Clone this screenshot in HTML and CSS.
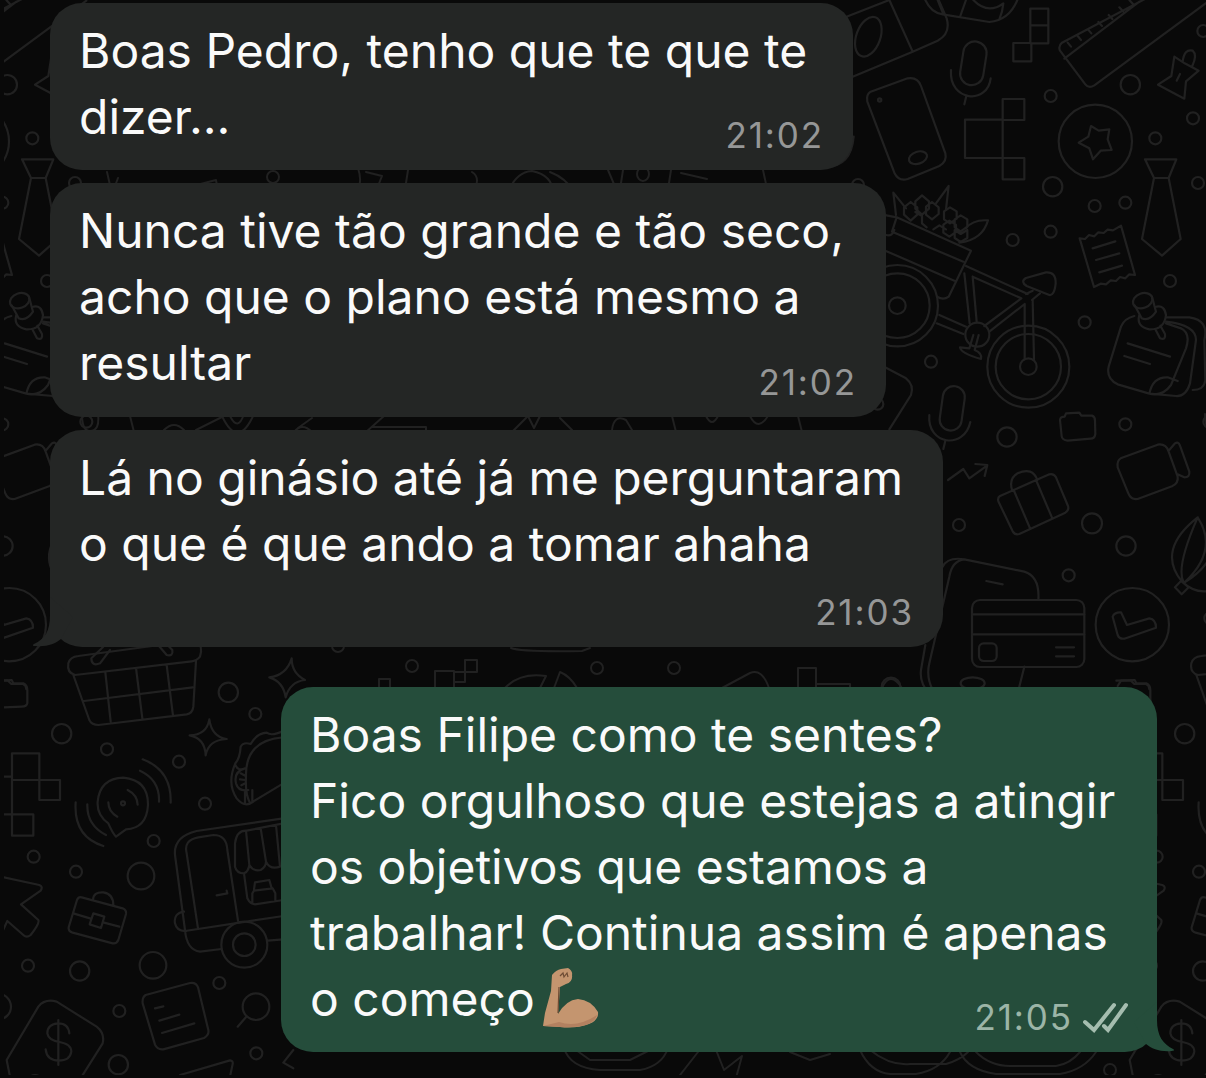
FILE: index.html
```html
<!DOCTYPE html>
<html lang="pt">
<head>
<meta charset="UTF-8" />
<title>Conversa</title>
<meta name="viewport" content="width=device-width, initial-scale=1" />
<link rel="stylesheet" href="styles.css">
</head>
<body>

<svg class="wallpaper" viewBox="0 0 1206 1078" aria-hidden="true">
  <defs>
    <clipPath id="edge"><rect x="4" y="0" width="1202" height="1075"/></clipPath>
    <g id="doodles">
      <!-- phone, ruler, star and tie -->
      <g class="large" transform="translate(846 0) scale(.33333)">
        <path d="M-10 55L130 0L200 155L20 230M130 0L200 155L275 122Q315 100 302 55L278 0"/>
        <ellipse cx="67" cy="110" rx="36" ry="62" transform="rotate(20 67 110)"/>
        <path d="M238 0Q255 38 290 43L430 66Q490 60 514 0M275 0L292 42M360 0L343 48M382 0Q425 45 472 10Q470 35 460 58"/>
        <rect x="347" y="124" width="70" height="132" rx="35" transform="rotate(9 382 190)"/>
        <path d="M315 210C308 305 425 315 434 235M361 288L355 313"/>
        <path d="M553 26h54v104h-54zM553 76h54M502 129h54v55h-54z"/>
        <path d="M895 -2L648 128Q636 138 642 152L718 253Q728 266 745 256L1090 2M655 176L880 5M665 128l10 12M695 108l10 12M726 88l10 12M757 66l11 12M788 45l11 12M820 22l11 12M850 0l11 12"/>
        <path d="M985 170L1016 190L1058 212L1020 244L1015 296L936 254L976 228ZM1010 185Q1015 145 1040 152Q1055 165 1038 200M992 242l10 -20"/>
        <path d="M74 275L185 235Q215 230 225 258L298 460Q304 485 280 498L185 537Q158 545 145 518L64 305Q60 283 74 275Z"/>
        <ellipse cx="216" cy="473" rx="28" ry="18" transform="rotate(-18 216 473)"/>
        <circle cx="101" cy="300" r="5"/>
        <path d="M470 297h65v63h-65zM357 359h113v115h-113zM470 474h65v64h-65z"/>
        <circle cx="748" cy="424" r="110"/>
        <path d="M735 378L758 392L790 388L785 418L797 450L764 452L741 478L730 445L698 428L727 410Z"/>
        <circle cx="614" cy="288" r="18"/><circle cx="853" cy="254" r="29"/><circle cx="1072" cy="93" r="18"/>
        <circle cx="1041" cy="355" r="18"/><circle cx="928" cy="415" r="18"/><circle cx="620" cy="560" r="29"/>
        <circle cx="746" cy="618" r="18"/><circle cx="838" cy="608" r="18"/><circle cx="1056" cy="549" r="18"/>
        <path d="M897 478h94L968 534H924ZM924 534L888 717L948 767L1004 717L968 534"/>
        <path d="M-60 500Q15 500 23 410"/><circle cx="36" cy="555" r="18"/>
      </g>
      <!-- bicycle, receipt and notes -->
      <g class="large" transform="translate(876 180) scale(.33333)">
        <path d="M60 105L52 38L90 85M180 70L218 18L210 88M250 188Q320 180 336 121Q290 118 270 145"/>
        <path d="M118 64l20-18 21 18v22l-21 18-20-18zM84 82l20-16 20 16v22l-20 18-20-18zM150 80l18-14 20 16v20l-20 16-18-14zM118 96l20 12v22l14 12M204 94l18-12 20 12v22l-20 14-18-12zM236 118l18-12 20 12v22l-20 14-18-12zM202 134l18-12 20 12v22l-20 14-18-12zM172 148l18-12 20 12M236 150l18 12 20-12v24l-20 12-18-12z"/>
        <path d="M0 100L62 112L285 212L218 350Q202 362 183 350M62 112L48 155L262 245M0 200L235 302M30 165Q50 170 55 150"/>
        <circle cx="64" cy="377" r="122"/><circle cx="64" cy="377" r="97"/><circle cx="64" cy="377" r="25"/>
        <path d="M270 258L455 342M290 290L302 425M265 280L281 430M190 405L270 440M182 430L262 462M340 455L446 372M325 438L436 355L290 290M446 372L446 538M470 360L474 538M450 342L470 332M468 360L492 340"/>
        <path d="M450 294L510 277Q540 275 539 310Q535 348 520 345L452 318Q432 305 450 294Z"/>
        <circle cx="457" cy="560" r="123"/><circle cx="457" cy="560" r="98"/><circle cx="457" cy="560" r="25"/>
        <circle cx="304" cy="464" r="36"/>
        <path d="M292 465L280 505L252 502Q255 520 315 537Q320 520 296 510L308 465"/>
        <path d="M611 175l16 2 12-12 16 4 12-12 16 2 12-10 16 2 24-14L777 285l-17-2-12 12-16-4-12 12-16-2-14 12-16-2-20 10ZM650 205l68-21M660 240l70-20M670 277l68-20"/>
        <path d="M775 408Q745 415 735 440L698 560Q690 595 725 613L820 641Q860 650 885 615L930 505Q945 460 915 445L870 430M870 412L940 412Q1000 420 985 480L988 600Q985 630 950 630M870 425Q960 435 960 480L942 610Q930 650 900 648L820 641Q830 590 875 592L905 603M755 490L882 530M745 528L822 552"/>
        <ellipse cx="800" cy="362" rx="30" ry="22" transform="rotate(-20 800 362)"/>
        <path d="M776 376L797 415Q820 425 840 395L828 350M790 405Q780 440 820 448Q865 450 870 405Q865 375 842 380M838 448L852 475Q870 482 867 462L853 437"/>
        <circle cx="410" cy="180" r="18"/><circle cx="524" cy="155" r="18"/><circle cx="882" cy="303" r="18"/><circle cx="626" cy="427" r="18"/><circle cx="165" cy="545" r="18"/>
        <path d="M20 558L90 595Q115 615 105 645L40 748"/>
        <rect x="195" y="618" width="66" height="134" rx="33" transform="rotate(8 228 690)"/>
        <circle cx="5" cy="672" r="17"/>
      </g>
      <!-- suitcase, camera, card, balloon -->
      <g class="large" transform="translate(876 400) scale(.33333)">
        <path d="M160 45C152 135 265 150 283 66M208 122L202 147"/>
        <path d="M552 60Q553 50 566 50L570 40L610 38L616 47L648 47Q657 50 657 62L658 102Q656 116 644 116L575 122Q558 120 557 108Z"/>
        <path d="M734 175L845 134Q870 130 878 155L905 230Q908 250 888 259L785 297Q765 300 757 280L725 202Q722 182 734 175ZM878 152L897 130Q907 123 912 137L940 215Q942 232 925 232L903 222"/>
        <path d="M216 240L262 207L280 235L333 197M298 192L334 195L326 228"/>
        <path d="M372 288L520 223Q534 220 540 232L576 318Q580 330 568 338L430 402Q417 406 410 394L367 304Q364 293 372 288ZM408 270Q398 235 425 220Q470 200 484 240M413 270L463 387M480 240L528 353"/>
        <circle cx="393" cy="111" r="29"/><circle cx="748" cy="73" r="18"/><circle cx="249" cy="375" r="18"/><circle cx="648" cy="370" r="30"/><circle cx="750" cy="438" r="29"/><circle cx="578" cy="526" r="18"/><circle cx="1000" cy="65" r="18"/><circle cx="1003" cy="655" r="18"/>
        <path d="M965 352Q840 450 918 545Q960 585 1010 570M965 352Q900 500 922 545M965 352Q1030 450 925 548M925 548Q1020 490 1020 400M897 562L915 543L938 562L917 583Z"/>
        <path d="M200 500Q215 470 265 478L445 515Q492 530 487 600M265 478Q228 482 220 530L160 790Q150 830 170 870M148 735L135 810Q130 850 160 880M445 800L425 880M331 543L380 553"/>
        <rect x="288" y="600" width="337" height="201" rx="24"/>
        <path d="M288 643h337M288 703h337M540 742h54M540 769h54"/>
        <rect x="309" y="730" width="53" height="53" rx="14"/>
        <circle cx="769" cy="674" r="110"/>
        <path d="M710 650Q715 636 735 637L753 675L820 655Q840 658 840 683L745 716Q730 718 725 705Z"/>
        <circle cx="45" cy="861" r="28"/><ellipse cx="290" cy="850" rx="36" ry="18"/>
        <path d="M725 858L735 842L765 842L775 852H810Q820 856 820 868"/>
      </g>
      <!-- basket, speaker bubble, taco -->
      <g class="large" transform="translate(0 640) scale(.33333)">
        <path d="M225 105Q200 98 205 70Q210 50 235 48L590 0Q610 20 600 50Q590 62 575 64ZM220 105L268 240Q275 255 295 255L560 223Q578 220 580 200L588 63M252 183L578 142M316 97L332 245M408 84L427 235M500 75L519 227"/>
        <path d="M310 20L274 55Q275 80 300 70L330 30M470 10L500 45Q520 50 517 30L500 12"/>
        <path d="M-20 122L35 120L40 130L70 130Q82 135 82 150V190Q80 200 65 200L-20 203"/>
        <path d="M628 238Q635 290 680 297Q625 300 617 346Q615 295 569 286Q620 285 628 238ZM875 55Q875 100 915 120Q870 125 857 172Q850 125 808 112Q860 105 875 55Z"/>
        <path d="M36 340h82v80h-82zM118 420h62v60h-62zM36 420v103h64v64h-64v-64M0 410h36M0 523h36"/>
        <path d="M325 550Q290 525 293 485Q300 415 370 413Q445 420 444 495Q440 565 378 568L348 590Q338 580 325 550ZM325 487Q325 515 352 530M383 450Q412 465 413 494M227 487Q220 590 310 618M262 493Q260 555 318 585M428 358Q515 390 512 488M420 392Q480 420 477 485"/>
        <circle cx="369" cy="490" r="6"/>
        <circle cx="685" cy="157" r="29"/><circle cx="766" cy="222" r="18"/><circle cx="185" cy="281" r="29"/><circle cx="321" cy="328" r="18"/><circle cx="537" cy="365" r="18"/><circle cx="615" cy="491" r="18"/><circle cx="461" cy="603" r="18"/>
        <path d="M850 292Q735 300 738 410Q735 460 750 490L850 430M706 370Q680 430 710 475Q735 505 760 485M706 375Q715 395 735 385M706 370Q720 355 722 320Q730 305 752 312Q770 280 800 278Q815 290 850 272M735 385Q700 395 708 430Q715 455 745 450M735 452v38M757 450v35M722 400l15 8M720 418l15 2M724 436l12-6"/>
      </g>
      <!-- van, briefcase, money -->
      <g class="large" transform="translate(0 850) scale(.33333)">
        <path d="M850 -95L590 -57Q520 -40 525 15L555 240Q560 300 600 305L665 297M560 10Q550 -30 595 -38L640 -45Q680 -45 682 0L714 212M560 10L594 235M555 243L850 198M803 272L850 268M705 -20Q710 -60 740 -58L850 -80M705 -20V50Q710 70 732 70Q745 65 748 45L738 -58M748 45Q760 65 782 60Q798 50 798 35L782 -65M798 35Q810 60 840 50L828 -75M732 70L742 145Q750 162 765 163L850 150M762 118L765 97L808 90L815 115M757 160V130L762 122L818 115L826 130V152M650 136L682 130L680 122M552 185Q520 190 525 220Q530 245 560 243"/>
        <circle cx="733" cy="284" r="69"/><circle cx="733" cy="284" r="34"/>
        <path d="M-20 75L118 105Q130 110 122 122L63 163L115 210Q120 220 92 255Q80 265 70 255L22 213L0 260"/>
        <path d="M245 142L368 175Q380 180 378 192L355 270Q350 282 338 280L218 248Q204 243 206 232L231 150Q235 140 245 142ZM279 150Q280 125 310 127Q340 132 340 165M220 190L270 205M312 218L358 230M280 190L313 200L303 234L269 223Z"/>
        <circle cx="101" cy="20" r="18"/><circle cx="228" cy="65" r="18"/><circle cx="423" cy="78" r="40"/><circle cx="84" cy="347" r="18"/><circle cx="239" cy="363" r="29"/><circle cx="459" cy="346" r="40"/><circle cx="358" cy="483" r="18"/><circle cx="658" cy="399" r="18"/><circle cx="355" cy="644" r="29"/><circle cx="769" cy="610" r="18"/><circle cx="-5" cy="470" r="38"/>
        <path d="M30 680L20 630L115 470Q135 445 170 455L290 530Q315 550 308 580L245 680"/>
        <path d="M208 550Q205 520 175 520Q142 522 142 550Q145 570 178 576Q214 582 214 605Q210 632 176 632Q140 630 137 598M175 510V645M90 680Q105 670 120 680"/>
        <path d="M437 435L570 399Q588 396 594 412L625 540Q628 555 612 564L490 598Q472 600 465 584L428 460Q426 442 437 435ZM465 475L490 469M478 512L538 494M486 549L583 520"/>
        <circle cx="768" cy="470" r="40"/><path d="M739 500L713 530M540 675L690 631Q700 632 698 642L690 680M880 600L850 638L880 655"/>
      </g>
      <!-- strips between bubbles -->
      <path d="M107 172L112 194L118 178M150 197L216 180L219 197M353 197Q364 186 358 168M366 172L382 176L374 196M408 170L404 196M472 172Q482 178 472 194M506 198Q514 172 532 171Q556 176 552 198M550 172Q566 178 574 192M608 170L619 196L623 170M671 170L667 196M681 173L707 179M763 170L766 184L762 196"/>
      <circle cx="273" cy="177" r="6"/><ellipse cx="643" cy="174" rx="6" ry="7"/>
      <path d="M82 414Q82 431 90 431Q100 431 98 414M130 416L134 432M164 430Q174 420 184 430M196 430L222 417M222 416Q238 450 254 414M230 416Q238 432 244 414M294 432Q302 422 312 432M312 418L298 428M384 416L366 432M372 427H426V432M512 432L528 416L534 428L540 416M560 418L572 430M612 430Q614 414 626 420L632 430M672 416L676 432M706 416Q712 428 718 416M750 416Q758 432 768 416M798 416L802 432"/>
      <path d="M511 648Q520 652 582 651L590 648M379 688v-9h11v9M435 688V671H454V688M465 660h12v12h-12zM454 682h11v-10H454M505 688Q520 672 546 676L540 688M554 688L560 672Q570 676 577 688M722 688L750 673Q762 668 769 688M798 668h18v20h-18zM816 684h34v5M882 688Q890 670 902 688"/>
      <circle cx="412" cy="666" r="6"/><circle cx="597" cy="668" r="6"/><circle cx="674" cy="668" r="6"/><circle cx="338" cy="646" r="6"/>
      <path d="M564 1048Q570 1068 600 1070H640Q662 1066 668 1048M576 1050L590 1060H630L650 1050M698 1052L680 1075M716 1050L724 1070L742 1056L736 1078M790 1052L810 1060L830 1054M860 1050Q870 1072 890 1074H916Q940 1070 950 1052M870 1050Q890 1066 910 1064H946Q960 1060 968 1052M960 1052Q968 1070 996 1074H1060Q1084 1070 1096 1052M976 1052Q990 1066 1010 1066H1056Q1070 1064 1080 1052"/>
      <circle cx="1110" cy="1070" r="6"/>
    </g>
  </defs>
  <g class="doodle-lines" clip-path="url(#edge)">
    <use href="#doodles"/>
    <use href="#doodles" x="-1123"/>
    <use href="#doodles" x="1123"/>
  </g>
</svg>

<main class="chat">
  <div class="bubble received first">
    <p>Boas Pedro, tenho que te que te dizer...</p>
    <time>21:02</time>
  </div>
  <div class="bubble received second">
    <p>Nunca tive tão grande e tão seco, acho que o plano está mesmo a resultar</p>
    <time>21:02</time>
  </div>
  <div class="bubble received third">
    <p>Lá no ginásio até já me perguntaram o que é que ando a tomar ahaha</p>
    <time>21:03</time>
    <svg class="tail" viewBox="0 0 40 50"><path d="M17 0V18C17 34 12 42 1 47C-1 48 0 49 2 49C14 50 22 47 28 42L40 20Z"/></svg>
  </div>
  <div class="bubble sent">
    <p>Boas Filipe como te sentes?<br>Fico orgulhoso que estejas a atingir os objetivos que estamos a trabalhar! Continua assim é apenas o começo</p>
    <svg class="biceps" viewBox="0 0 58 62">
      <path class="skin" d="M2 59L4 46L10 24L11 8Q15 3 20 2L27 1Q32 4 31 8Q32 15 25 17L19 20L18 34L17 47Q25 33 37 32Q50 33 57 45Q58 53 48 57Q35 62 19 60Z"/>
      <path class="shade" d="M2 59L18 55Q37 61 56 48Q54 55 45 58Q34 61 19 60Z"/>
      <path class="crease" d="M19 9l3-3 1 4 3-4 1 4M18 20L17 46"/>
    </svg>
    <time>21:05<svg class="ticks" viewBox="0 0 46 31"><path d="M3 20L12 28L32 3M22 24L26 28L44 3"/></svg></time>
    <svg class="tail" viewBox="0 0 40 50"><path d="M23 0V18C23 34 29 42 39 47C41 48 40 49 38 49C26 50 18 47 12 42L0 20Z"/></svg>
  </div>
</main>

</body>
</html>
```
FILE: styles.css
```css
body {
  margin: 0;
  background: #090909;
  color: #fafafa;
  font-family: Inter, "Liberation Sans", sans-serif;
}
.wallpaper {
  position: absolute;
  top: 0;
  left: 0;
  width: 1206px;
  height: 1078px;
}
.doodle-lines {
  fill: none;
  stroke: #212121;
  stroke-width: 2;
  stroke-linecap: round;
  stroke-linejoin: round;
}
.large {
  stroke-width: 6.6;
}
.chat {
  position: relative;
  display: flex;
  flex-direction: column;
  align-items: flex-start;
  height: 1078px;
  padding: 3px 49px 0 50px;
  box-sizing: border-box;
  overflow: hidden;
}
.bubble {
  position: relative;
  box-sizing: border-box;
  padding: 15px 29px 20px;
  border-radius: 32px;
}
.received { background: #242625; }
.sent {
  align-self: flex-end;
  width: 876px;
  height: 365px;
  margin-top: 40px;
  background: #254d3b;
}
.first { width: 803px; height: 167px; }
.second { width: 836px; height: 234px; margin-top: 13px; }
.third { width: 893px; height: 217px; margin-top: 13px; }
.bubble p {
  margin: 0;
  font-size: 48px;
  line-height: 66px;
}
time {
  position: absolute;
  right: 29px;
  bottom: 14px;
  display: flex;
  align-items: center;
  font-size: 35px;
  line-height: 42px;
  letter-spacing: 1.9px;
  color: #969797;
}
.sent time { color: #9cb5a7; }
.ticks {
  width: 46px;
  height: 31px;
  margin-left: 9px;
  fill: none;
  stroke: #a5bdaf;
  stroke-width: 4;
  stroke-linecap: round;
}
.tail {
  position: absolute;
  bottom: 0;
  width: 40px;
  height: 50px;
}
.received .tail { left: -17px; fill: #242625; }
.sent .tail { right: -17px; fill: #254d3b; }
.biceps {
  position: absolute;
  left: 260px;
  bottom: 23px;
  width: 58px;
  height: 62px;
}
.skin { fill: #c4956f; }
.shade { fill: #b38160; }
.crease {
  fill: none;
  stroke: #6d4b34;
  stroke-width: 1.2;
}
```
